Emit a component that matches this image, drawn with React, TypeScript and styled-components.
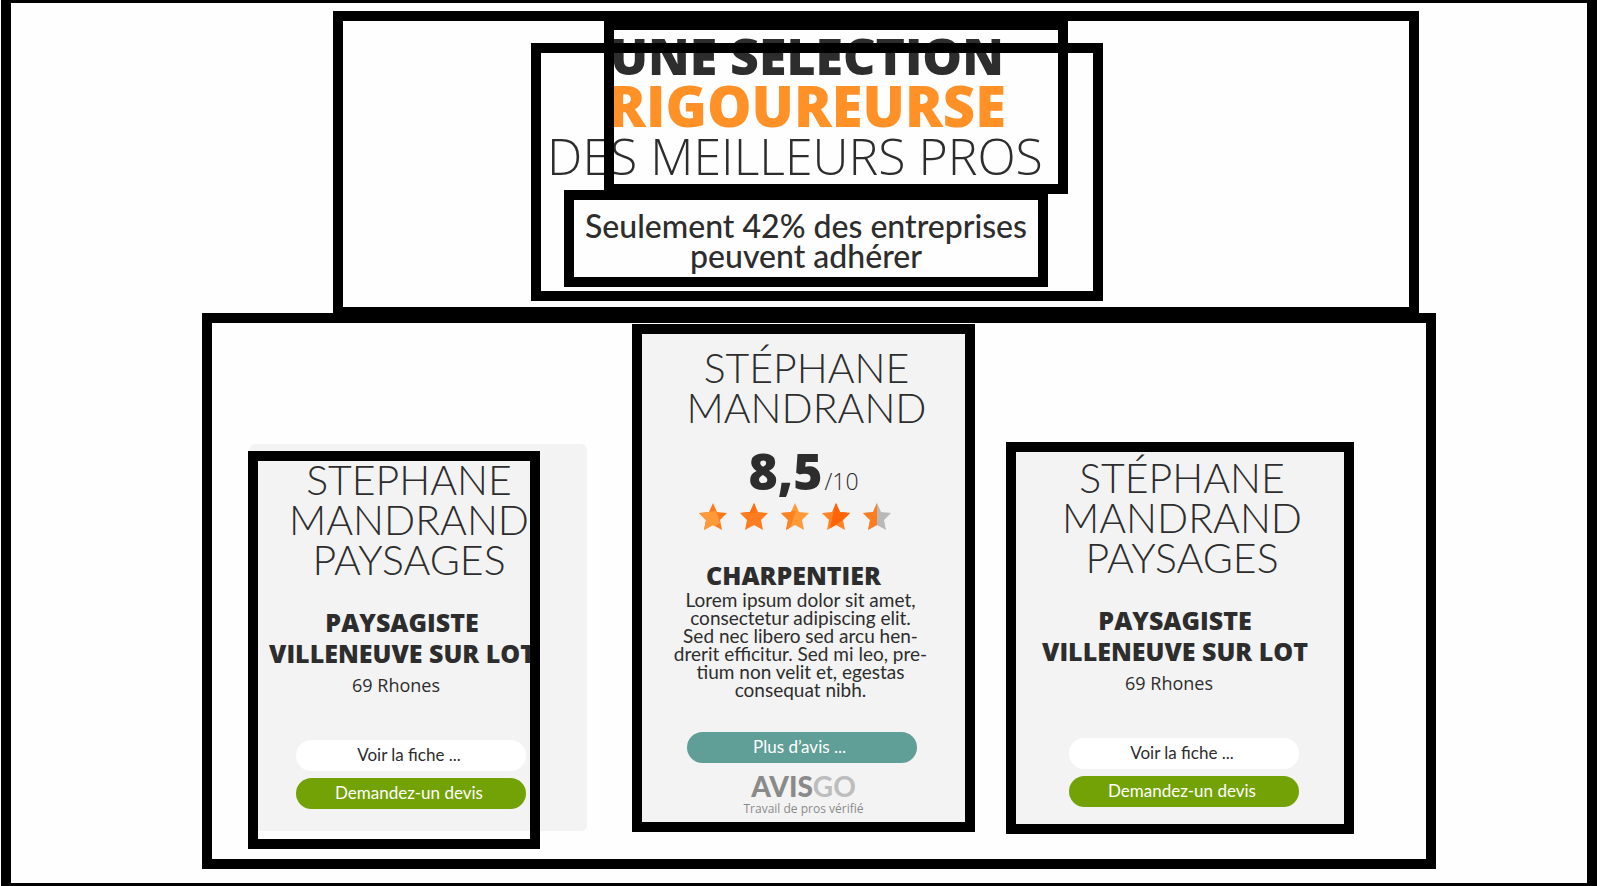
import React from "react";
import styled, { createGlobalStyle, css } from "styled-components";

const ink = "#2d2d2d";
const panel = "#f3f3f3";
const display = `"Open Sans", "Noto Sans", sans-serif`;
const body = `Lato, "Open Sans", sans-serif`;

const GlobalStyle = createGlobalStyle`
  *, *::before, *::after { box-sizing: border-box; }
  body { margin: 0; background: #fefefe; color: ${ink}; font-family: ${body}; }
  h1, h2, h3, p { margin: 0; font-weight: inherit; }
`;

/* Thick black outline laid over the content of a block */
const outline = css`
  position: relative;
  &::after {
    content: "";
    position: absolute;
    inset: 0;
    border: 10px solid #000;
    pointer-events: none;
  }
`;

const Page = styled.div`
  min-height: 100vh;
  margin: 0 3px 0 1px;
  padding: 8px 0 14px;
  border: solid #000;
  border-width: 3px 10px;
`;

const Hero = styled.header`
  ${outline}
  display: flex;
  justify-content: center;
  margin: 0 168px 0 322px;
  padding: 32px 118px 16px 0;
`;

const Summary = styled.div`
  ${outline}
  width: 572px;
  padding-bottom: 14px;
`;

const Title = styled.h1`
  ${outline}
  display: flex;
  flex-direction: column;
  align-items: center;
  width: 464px;
  height: 174px;
  margin: -23px 0 0 73px;
  padding: 13px 58px 0 0;
  font-family: ${display};
  white-space: nowrap;
`;

const TitleLine = styled.span<{ $tone: "dark" | "accent" | "light" }>`
  font-size: ${(p) => (p.$tone === "accent" ? 56 : 50)}px;
  font-weight: ${(p) => (p.$tone === "light" ? 300 : 800)};
  line-height: ${(p) => ({ dark: 46, accent: 52, light: 50 })[p.$tone]}px;
  color: ${(p) => (p.$tone === "accent" ? "#ff9126" : ink)};
  padding-right: ${(p) => (p.$tone === "light" ? 24 : 0)}px;
`;

const Tagline = styled.p`
  ${outline}
  width: 484px;
  margin: -4px 0 0 33px;
  padding: 21px 0 16px;
  font-size: 32px;
  font-weight: 500;
  line-height: 30px;
  text-align: center;
  white-space: nowrap;
`;

const Cards = styled.main`
  ${outline}
  display: grid;
  grid-template-columns: 352fr 343fr 348fr;
  column-gap: 31px;
  align-items: end;
  margin: -4px 151px 0 191px;
  padding: 11px 82px 35px 47px;
`;

const Name = styled.h2`
  padding-right: 4px;
  font-size: 41px;
  font-weight: 300;
  line-height: 40px;
  text-align: center;
`;

const Trade = styled.h3`
  margin-top: 27px;
  padding-right: 18px;
  font-family: ${display};
  font-size: 25px;
  font-weight: 800;
  line-height: 31px;
  text-align: center;
`;

const Place = styled.p`
  margin-top: 4px;
  padding-right: 30px;
  font-family: ${display};
  font-size: 18px;
  line-height: 24px;
`;

const Actions = styled.div`
  display: flex;
  flex-direction: column;
  gap: 7px;
  margin-top: 43px;
`;

const Card = styled.article`
  display: flex;
  flex-direction: column;
  align-items: center;
  background: ${panel};
  white-space: nowrap;
`;

const RoundedCard = styled(Card)`
  position: relative;
  margin: 0 14px 3px 0;
  padding: 16px 14px 22px 0;
  border-radius: 6px;
  &::after {
    content: "";
    position: absolute;
    top: 7px;
    bottom: -18px;
    left: -1px;
    width: 292px;
    border: 10px solid #000;
    pointer-events: none;
  }
`;

const OutlinedCard = styled(Card)`
  ${outline}
  padding: 16px 0 27px 8px;
`;

const ReviewCard = styled(Card)`
  ${outline}
  margin-bottom: 2px;
  padding: 24px 0 16px;

  ${Name} {
    padding: 0 0 0 6px;
  }
  ${Trade} {
    padding-right: 20px;
  }
  ${Actions} {
    margin: 33px 4px 0 0;
  }
`;

const Pill = styled.button<{ $fill: string; $color?: string }>`
  width: 230px;
  height: 31px;
  padding: 0 4px 2px 0;
  border: 0;
  border-radius: 16px;
  background: ${(p) => p.$fill};
  color: ${(p) => p.$color ?? "#fff"};
  font-family: ${body};
  font-size: 17px;
  line-height: 28px;
  cursor: pointer;
`;

const Score = styled.p`
  height: 50px;
  margin-top: 18px;
  font-family: ${display};
  font-size: 23px;
  font-weight: 300;
  line-height: 50px;
`;

const ScoreValue = styled.strong`
  margin-right: 2px;
  font-size: 50px;
  font-weight: 800;
`;

const Stars = styled.div`
  display: flex;
  gap: 13px;
  margin: 7px 0 3px;
  padding-right: 18px;
`;

const Review = styled.p`
  padding-right: 6px;
  font-size: 19px;
  line-height: 18px;
  text-align: center;
`;

const Brand = styled.p`
  margin-top: 8px;
  font-family: ${body};
  font-size: 28px;
  font-weight: 900;
  line-height: 30px;
  color: #8a8a8a;
`;

const BrandEnd = styled.span`
  font-weight: 700;
  color: #bdbdbd;
`;

const BrandNote = styled.p`
  margin-top: 1px;
  font-family: ${display};
  font-size: 12px;
  line-height: 14px;
  color: #8a8a8a;
`;

const starShape = "M14 0 L18 9 L28 10 L21 17 L23 27 L14 22 L5 27 L7 17 L0 10 L10 9 Z";

const starFills = [
  { base: "#ff7a1c", facet: "#ff9a3a", cut: "M0 10L17 8L21 20L8 28H0Z" },
  { base: "#ff7d1e", facet: "#ff6f12", cut: "M0 10H14L18 0H8Z" },
  { base: "#ff9a38", facet: "#ff8222", cut: "M0 8H15L8 28H0Z" },
  { base: "#ff8426", facet: "#ff6508", cut: "M13 0H28V12L8 26Z" },
  { base: "#b9b9b9", facet: "#ff7d1e", cut: "M0 0H14V28H0Z" },
];

function Star({ index }: { index: number }) {
  const fill = starFills[index];
  return (
    <svg width="28" height="27" viewBox="0 0 28 27" aria-hidden="true">
      <clipPath id={`star-${index}`}>
        <path d={starShape} />
      </clipPath>
      <g clipPath={`url(#star-${index})`}>
        <path d="M0 0H28V28H0Z" fill={fill.base} />
        <path d={fill.cut} fill={fill.facet} />
      </g>
    </svg>
  );
}

function Lines({ of }: { of: string[] }) {
  return (
    <>
      {of.map((line, i) => (
        <React.Fragment key={line}>
          {i > 0 && <br />}
          {line}
        </React.Fragment>
      ))}
    </>
  );
}

function Landscaper({ name }: { name: string[] }) {
  return (
    <>
      <Name><Lines of={name} /></Name>
      <Trade><Lines of={["PAYSAGISTE", "VILLENEUVE SUR LOT"]} /></Trade>
      <Place>69 Rhones</Place>
      <Actions>
        <Pill type="button" $fill="#fff" $color={ink}>Voir la fiche ...</Pill>
        <Pill type="button" $fill="#72a206">Demandez-un devis</Pill>
      </Actions>
    </>
  );
}

export default function App() {
  return (
    <>
      <GlobalStyle />
      <Page>
        <Hero>
          <Summary>
            <Title>
              <TitleLine $tone="dark">UNE SELECTION</TitleLine>
              <TitleLine $tone="accent">RIGOUREURSE</TitleLine>
              <TitleLine $tone="light">DES MEILLEURS PROS</TitleLine>
            </Title>
            <Tagline><Lines of={["Seulement 42% des entreprises", "peuvent adhérer"]} /></Tagline>
          </Summary>
        </Hero>
        <Cards>
          <RoundedCard>
            <Landscaper name={["STEPHANE", "MANDRAND", "PAYSAGES"]} />
          </RoundedCard>
          <ReviewCard>
            <Name><Lines of={["STÉPHANE", "MANDRAND"]} /></Name>
            <Score><ScoreValue>8,5</ScoreValue>/10</Score>
            <Stars role="img" aria-label="4,5 / 5">
              {starFills.map((_, i) => <Star key={i} index={i} />)}
            </Stars>
            <Trade>CHARPENTIER</Trade>
            <Review>
              <Lines
                of={[
                  "Lorem ipsum dolor sit amet,",
                  "consectetur adipiscing elit.",
                  "Sed nec libero sed arcu hen-",
                  "drerit efficitur. Sed mi leo, pre-",
                  "tium non velit et, egestas",
                  "consequat nibh.",
                ]}
              />
            </Review>
            <Actions>
              <Pill type="button" $fill="#609f97">Plus d’avis ...</Pill>
            </Actions>
            <Brand>AVIS<BrandEnd>GO</BrandEnd></Brand>
            <BrandNote>Travail de pros vérifié</BrandNote>
          </ReviewCard>
          <OutlinedCard>
            <Landscaper name={["STÉPHANE", "MANDRAND", "PAYSAGES"]} />
          </OutlinedCard>
        </Cards>
      </Page>
    </>
  );
}
